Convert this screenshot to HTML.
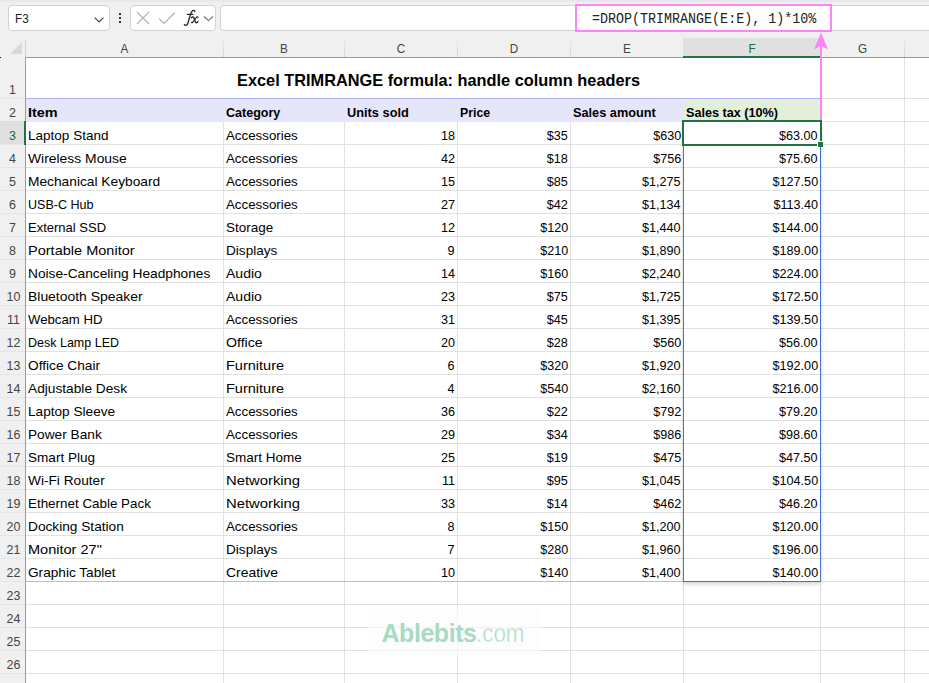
<!DOCTYPE html>
<html><head><meta charset="utf-8"><title>Excel TRIMRANGE</title>
<style>
html,body{margin:0;padding:0;}
body{width:929px;height:683px;overflow:hidden;background:#f0f0f0;font-family:"Liberation Sans",sans-serif;position:relative;color:#000;}
.abs{position:absolute;}
.box{position:absolute;background:#fff;border:1px solid #d2d2d2;border-radius:4px;box-sizing:border-box;}
.sheet{position:absolute;left:26px;top:58px;width:903px;height:625px;background:#fff;}
.vl{position:absolute;width:1px;background:#e1e1e1;top:58px;height:625px;}
.hl{position:absolute;height:1px;background:#e1e1e1;left:26px;width:903px;}
.t{position:absolute;white-space:nowrap;font-size:13.6px;line-height:23px;height:23px;transform-origin:0 50%;}
.r{transform-origin:100% 50%;}
.b{font-weight:bold;}
.rh{position:absolute;left:-0.2px;width:25px;text-align:center;font-size:13.4px;color:#444;line-height:23px;height:23px;transform:scaleX(0.93);}
.ch{position:absolute;top:39px;height:19px;line-height:20px;text-align:center;font-size:12.6px;color:#444;transform:scaleX(0.93);}
</style></head><body>

<div class="abs" style="left:0;top:0;width:929px;height:3px;background:linear-gradient(#e4e4e4,#f0f0f0);"></div>
<div class="box" style="left:8px;top:5px;width:102px;height:26px;"></div>
<div class="abs" style="left:15px;top:5px;height:26px;line-height:27px;font-size:13.5px;color:#222;transform:scaleX(0.87);transform-origin:0 50%;">F3</div>
<svg class="abs" style="left:90px;top:10px" width="20" height="16" viewBox="90 10 20 16"><path d="M94.7 17.6 L99.1 22 L103.5 17.6" fill="none" stroke="#444" stroke-width="1.2"/></svg>
<div class="abs" style="left:119px;top:13.3px;width:2px;height:2px;background:#333;"></div>
<div class="abs" style="left:119px;top:17.2px;width:2px;height:2px;background:#333;"></div>
<div class="abs" style="left:119px;top:21.1px;width:2px;height:2px;background:#333;"></div>
<div class="box" style="left:130px;top:5px;width:86px;height:26px;"></div>
<svg class="abs" style="left:136px;top:11px" width="14" height="14" viewBox="0 0 14 14"><path d="M1 1 L13 13 M13 1 L1 13" fill="none" stroke="#b4b4b4" stroke-width="1.2"/></svg>
<svg class="abs" style="left:158px;top:11px" width="18" height="14" viewBox="0 0 18 14"><path d="M1 7.5 L6 12.5 L17 1.5" fill="none" stroke="#b4b4b4" stroke-width="1.2"/></svg>
<svg class="abs" style="left:180px;top:6px" width="22" height="24" viewBox="180 6 22 24"><g fill="none" stroke="#262626" stroke-linecap="round" stroke-linejoin="round"><path d="M194.8 11.5 C194.6 10.2 192.9 9.9 192.1 11.1 C191.1 12.5 190.1 15.5 189.3 18.5 C188.5 21.5 188.1 23.6 187.1 24.7 C186.3 25.7 184.8 25.6 184.4 24.6" stroke-width="1.35"/><path d="M187.3 14.4 L192.8 14.4" stroke-width="1.1"/><path d="M191.6 17.8 C192.2 16.7 193.4 16.5 193.9 17.7 L195.3 21.9 C195.7 23.1 197.1 23 197.9 21.7" stroke-width="1.35"/><path d="M198.1 17.3 C197.7 16.6 196.9 16.8 196.2 17.7 L193.1 21.9 C192.5 22.8 191.7 22.9 191.4 22.3" stroke-width="1.1"/></g></svg>
<svg class="abs" style="left:200px;top:10px" width="16" height="16" viewBox="200 10 16 16"><path d="M204 16.5 L208.5 20.6 L213 16.5" fill="none" stroke="#707070" stroke-width="1.1"/></svg>
<div class="box" style="left:220px;top:5px;width:720px;height:26px;"></div>
<div class="abs" style="left:575px;top:4px;width:257px;height:28px;box-sizing:border-box;border:2px solid #fb84f8;background:#fff;"></div>
<div class="abs" style="left:592px;top:5.5px;height:28px;line-height:28px;font-family:'Liberation Mono',monospace;font-size:13.35px;color:#222;white-space:nowrap;transform:scaleY(1.06);transform-origin:0 70%;">=DROP(TRIMRANGE(E:E), 1)*10%</div>
<div class="ch" style="left:26px;width:197px;">A</div>
<div class="abs" style="left:223px;top:39px;width:1px;height:18px;background:linear-gradient(#ececec,#d2d2d2);"></div>
<div class="ch" style="left:224px;width:120px;">B</div>
<div class="abs" style="left:344px;top:39px;width:1px;height:18px;background:linear-gradient(#ececec,#d2d2d2);"></div>
<div class="ch" style="left:345px;width:112px;">C</div>
<div class="abs" style="left:457px;top:39px;width:1px;height:18px;background:linear-gradient(#ececec,#d2d2d2);"></div>
<div class="ch" style="left:458px;width:112px;">D</div>
<div class="abs" style="left:570px;top:39px;width:1px;height:18px;background:linear-gradient(#ececec,#d2d2d2);"></div>
<div class="ch" style="left:571px;width:112px;">E</div>
<div class="abs" style="left:683px;top:38px;width:137px;height:19px;background:#e0e0e0;"></div>
<div class="ch" style="left:684px;width:136px;color:#1e6b41;">F</div>
<div class="ch" style="left:821px;width:83px;">G</div>
<div class="abs" style="left:904px;top:39px;width:1px;height:18px;background:linear-gradient(#ececec,#d2d2d2);"></div>
<div class="ch" style="left:905px;width:85px;">H</div>
<div class="abs" style="left:990px;top:39px;width:1px;height:18px;background:linear-gradient(#ececec,#d2d2d2);"></div>
<svg class="abs" style="left:10px;top:42px" width="13" height="13" viewBox="0 0 13 13"><path d="M12 0 L12 12 L0 12 Z" fill="#d8d8d8"/></svg>
<div class="abs" style="left:25px;top:40px;width:1px;height:17px;background:#d0d0d0;"></div>
<div class="abs" style="left:25px;top:57px;width:904px;height:1px;background:#9b9b9b;"></div>
<div class="abs" style="left:25px;top:57px;width:1px;height:626px;background:#9b9b9b;"></div>
<div class="abs" style="left:683px;top:56px;width:138px;height:2px;background:#217346;"></div>
<div class="sheet"></div>
<div class="vl" style="left:223px;"></div>
<div class="vl" style="left:344px;"></div>
<div class="vl" style="left:457px;"></div>
<div class="vl" style="left:570px;"></div>
<div class="vl" style="left:683px;"></div>
<div class="vl" style="left:820px;"></div>
<div class="vl" style="left:904px;"></div>
<div class="hl" style="top:98px;"></div>
<div class="hl" style="top:121px;"></div>
<div class="hl" style="top:144px;"></div>
<div class="hl" style="top:167px;"></div>
<div class="hl" style="top:190px;"></div>
<div class="hl" style="top:213px;"></div>
<div class="hl" style="top:236px;"></div>
<div class="hl" style="top:259px;"></div>
<div class="hl" style="top:282px;"></div>
<div class="hl" style="top:305px;"></div>
<div class="hl" style="top:328px;"></div>
<div class="hl" style="top:351px;"></div>
<div class="hl" style="top:374px;"></div>
<div class="hl" style="top:397px;"></div>
<div class="hl" style="top:420px;"></div>
<div class="hl" style="top:443px;"></div>
<div class="hl" style="top:466px;"></div>
<div class="hl" style="top:489px;"></div>
<div class="hl" style="top:512px;"></div>
<div class="hl" style="top:535px;"></div>
<div class="hl" style="top:558px;"></div>
<div class="hl" style="top:581px;"></div>
<div class="hl" style="top:604px;"></div>
<div class="hl" style="top:627px;"></div>
<div class="hl" style="top:650px;"></div>
<div class="hl" style="top:673px;"></div>
<div class="abs" style="left:26px;top:58px;width:794px;height:40px;background:#fff;"></div>
<div class="abs" style="left:26px;top:98px;width:657px;height:24px;background:#e6e6fa;"></div>
<div class="abs" style="left:683px;top:98px;width:137px;height:24px;background:#e2efda;"></div>
<div class="abs" style="left:26px;top:98px;width:794px;height:1px;background:#b0b0f8;"></div>
<div class="abs" style="left:26px;top:581px;width:657px;height:1px;background:#b9b9f0;"></div>
<div class="abs" style="left:0;top:98px;width:25px;height:1px;background:#e5e5e5;"></div>
<div class="abs" style="left:0;top:121px;width:25px;height:1px;background:#e5e5e5;"></div>
<div class="abs" style="left:0;top:144px;width:25px;height:1px;background:#e5e5e5;"></div>
<div class="abs" style="left:0;top:167px;width:25px;height:1px;background:#e5e5e5;"></div>
<div class="abs" style="left:0;top:190px;width:25px;height:1px;background:#e5e5e5;"></div>
<div class="abs" style="left:0;top:213px;width:25px;height:1px;background:#e5e5e5;"></div>
<div class="abs" style="left:0;top:236px;width:25px;height:1px;background:#e5e5e5;"></div>
<div class="abs" style="left:0;top:259px;width:25px;height:1px;background:#e5e5e5;"></div>
<div class="abs" style="left:0;top:282px;width:25px;height:1px;background:#e5e5e5;"></div>
<div class="abs" style="left:0;top:305px;width:25px;height:1px;background:#e5e5e5;"></div>
<div class="abs" style="left:0;top:328px;width:25px;height:1px;background:#e5e5e5;"></div>
<div class="abs" style="left:0;top:351px;width:25px;height:1px;background:#e5e5e5;"></div>
<div class="abs" style="left:0;top:374px;width:25px;height:1px;background:#e5e5e5;"></div>
<div class="abs" style="left:0;top:397px;width:25px;height:1px;background:#e5e5e5;"></div>
<div class="abs" style="left:0;top:420px;width:25px;height:1px;background:#e5e5e5;"></div>
<div class="abs" style="left:0;top:443px;width:25px;height:1px;background:#e5e5e5;"></div>
<div class="abs" style="left:0;top:466px;width:25px;height:1px;background:#e5e5e5;"></div>
<div class="abs" style="left:0;top:489px;width:25px;height:1px;background:#e5e5e5;"></div>
<div class="abs" style="left:0;top:512px;width:25px;height:1px;background:#e5e5e5;"></div>
<div class="abs" style="left:0;top:535px;width:25px;height:1px;background:#e5e5e5;"></div>
<div class="abs" style="left:0;top:558px;width:25px;height:1px;background:#e5e5e5;"></div>
<div class="abs" style="left:0;top:581px;width:25px;height:1px;background:#e5e5e5;"></div>
<div class="abs" style="left:0;top:604px;width:25px;height:1px;background:#e5e5e5;"></div>
<div class="abs" style="left:0;top:627px;width:25px;height:1px;background:#e5e5e5;"></div>
<div class="abs" style="left:0;top:650px;width:25px;height:1px;background:#e5e5e5;"></div>
<div class="abs" style="left:0;top:673px;width:25px;height:1px;background:#e5e5e5;"></div>
<div class="rh" style="top:78px;">1</div>
<div class="rh" style="top:101px;">2</div>
<div class="abs" style="left:0;top:121px;width:24px;height:23px;background:#e0e0e0;"></div>
<div class="abs" style="left:24px;top:121px;width:2px;height:24px;background:#217346;"></div>
<div class="rh" style="top:124px;color:#1e6b41;">3</div>
<div class="rh" style="top:147px;color:#444;">4</div>
<div class="rh" style="top:170px;color:#444;">5</div>
<div class="rh" style="top:193px;color:#444;">6</div>
<div class="rh" style="top:216px;color:#444;">7</div>
<div class="rh" style="top:239px;color:#444;">8</div>
<div class="rh" style="top:262px;color:#444;">9</div>
<div class="rh" style="top:285px;color:#444;left:0.7px;">10</div>
<div class="rh" style="top:308px;color:#444;left:0.7px;">11</div>
<div class="rh" style="top:331px;color:#444;left:0.7px;">12</div>
<div class="rh" style="top:354px;color:#444;left:0.7px;">13</div>
<div class="rh" style="top:377px;color:#444;left:0.7px;">14</div>
<div class="rh" style="top:400px;color:#444;left:0.7px;">15</div>
<div class="rh" style="top:423px;color:#444;left:0.7px;">16</div>
<div class="rh" style="top:446px;color:#444;left:0.7px;">17</div>
<div class="rh" style="top:469px;color:#444;left:0.7px;">18</div>
<div class="rh" style="top:492px;color:#444;left:0.7px;">19</div>
<div class="rh" style="top:515px;color:#444;left:0.7px;">20</div>
<div class="rh" style="top:538px;color:#444;left:0.7px;">21</div>
<div class="rh" style="top:561px;color:#444;left:0.7px;">22</div>
<div class="rh" style="top:584px;color:#444;left:0.7px;">23</div>
<div class="rh" style="top:607px;color:#444;left:0.7px;">24</div>
<div class="rh" style="top:630px;color:#444;left:0.7px;">25</div>
<div class="rh" style="top:653px;color:#444;left:0.7px;">26</div>
<div class="rh" style="top:676px;color:#444;left:0.7px;">27</div>
<div class="abs b" style="left:237px;top:68px;font-size:16.2px;line-height:24px;white-space:nowrap;transform:scaleX(1.009);transform-origin:0 50%;" id="title">Excel TRIMRANGE formula: handle column headers</div>
<div class="t b" style="left:28px;top:101px;transform:scaleX(1.0624);">Item</div>
<div class="t b" style="left:226px;top:101px;transform:scaleX(0.9216);">Category</div>
<div class="t b" style="left:347px;top:101px;transform:scaleX(0.9407);">Units sold</div>
<div class="t b" style="left:460px;top:101px;transform:scaleX(0.9058);">Price</div>
<div class="t b" style="left:573px;top:101px;transform:scaleX(0.937);">Sales amount</div>
<div class="t b" style="left:686px;top:101px;transform:scaleX(0.9298);">Sales tax (10%)</div>
<div class="t" style="left:28px;top:124px;transform:scaleX(0.9952);">Laptop Stand</div>
<div class="t" style="left:226px;top:124px;transform:scaleX(0.9786);">Accessories</div>
<div class="t r" style="right:474px;top:124px;transform:scaleX(0.927);">18</div>
<div class="t r" style="right:361px;top:124px;transform:scaleX(0.927);">$35</div>
<div class="t r" style="right:248px;top:124px;transform:scaleX(0.927);">$630</div>
<div class="t r" style="right:111px;top:124px;transform:scaleX(0.927);">$63.00</div>
<div class="t" style="left:28px;top:147px;transform:scaleX(1.0211);">Wireless Mouse</div>
<div class="t" style="left:226px;top:147px;transform:scaleX(0.9786);">Accessories</div>
<div class="t r" style="right:474px;top:147px;transform:scaleX(0.927);">42</div>
<div class="t r" style="right:361px;top:147px;transform:scaleX(0.927);">$18</div>
<div class="t r" style="right:248px;top:147px;transform:scaleX(0.927);">$756</div>
<div class="t r" style="right:111px;top:147px;transform:scaleX(0.927);">$75.60</div>
<div class="t" style="left:28px;top:170px;transform:scaleX(1.0109);">Mechanical Keyboard</div>
<div class="t" style="left:226px;top:170px;transform:scaleX(0.9786);">Accessories</div>
<div class="t r" style="right:474px;top:170px;transform:scaleX(0.927);">15</div>
<div class="t r" style="right:361px;top:170px;transform:scaleX(0.927);">$85</div>
<div class="t r" style="right:248px;top:170px;transform:scaleX(0.927);">$1,275</div>
<div class="t r" style="right:111px;top:170px;transform:scaleX(0.927);">$127.50</div>
<div class="t" style="left:28px;top:193px;transform:scaleX(0.9224);">USB-C Hub</div>
<div class="t" style="left:226px;top:193px;transform:scaleX(0.9786);">Accessories</div>
<div class="t r" style="right:474px;top:193px;transform:scaleX(0.927);">27</div>
<div class="t r" style="right:361px;top:193px;transform:scaleX(0.927);">$42</div>
<div class="t r" style="right:248px;top:193px;transform:scaleX(0.927);">$1,134</div>
<div class="t r" style="right:111px;top:193px;transform:scaleX(0.927);">$113.40</div>
<div class="t" style="left:28px;top:216px;transform:scaleX(0.9571);">External SSD</div>
<div class="t" style="left:226px;top:216px;transform:scaleX(0.9916);">Storage</div>
<div class="t r" style="right:474px;top:216px;transform:scaleX(0.927);">12</div>
<div class="t r" style="right:361px;top:216px;transform:scaleX(0.927);">$120</div>
<div class="t r" style="right:248px;top:216px;transform:scaleX(0.927);">$1,440</div>
<div class="t r" style="right:111px;top:216px;transform:scaleX(0.927);">$144.00</div>
<div class="t" style="left:28px;top:239px;transform:scaleX(1.0687);">Portable Monitor</div>
<div class="t" style="left:226px;top:239px;transform:scaleX(1.0003);">Displays</div>
<div class="t r" style="right:474px;top:239px;transform:scaleX(0.927);">9</div>
<div class="t r" style="right:361px;top:239px;transform:scaleX(0.927);">$210</div>
<div class="t r" style="right:248px;top:239px;transform:scaleX(0.927);">$1,890</div>
<div class="t r" style="right:111px;top:239px;transform:scaleX(0.927);">$189.00</div>
<div class="t" style="left:28px;top:262px;transform:scaleX(1.0093);">Noise-Canceling Headphones</div>
<div class="t" style="left:226px;top:262px;transform:scaleX(1.0318);">Audio</div>
<div class="t r" style="right:474px;top:262px;transform:scaleX(0.927);">14</div>
<div class="t r" style="right:361px;top:262px;transform:scaleX(0.927);">$160</div>
<div class="t r" style="right:248px;top:262px;transform:scaleX(0.927);">$2,240</div>
<div class="t r" style="right:111px;top:262px;transform:scaleX(0.927);">$224.00</div>
<div class="t" style="left:28px;top:285px;transform:scaleX(1.0241);">Bluetooth Speaker</div>
<div class="t" style="left:226px;top:285px;transform:scaleX(1.0318);">Audio</div>
<div class="t r" style="right:474px;top:285px;transform:scaleX(0.927);">23</div>
<div class="t r" style="right:361px;top:285px;transform:scaleX(0.927);">$75</div>
<div class="t r" style="right:248px;top:285px;transform:scaleX(0.927);">$1,725</div>
<div class="t r" style="right:111px;top:285px;transform:scaleX(0.927);">$172.50</div>
<div class="t" style="left:28px;top:308px;transform:scaleX(0.9696);">Webcam HD</div>
<div class="t" style="left:226px;top:308px;transform:scaleX(0.9786);">Accessories</div>
<div class="t r" style="right:474px;top:308px;transform:scaleX(0.927);">31</div>
<div class="t r" style="right:361px;top:308px;transform:scaleX(0.927);">$45</div>
<div class="t r" style="right:248px;top:308px;transform:scaleX(0.927);">$1,395</div>
<div class="t r" style="right:111px;top:308px;transform:scaleX(0.927);">$139.50</div>
<div class="t" style="left:28px;top:331px;transform:scaleX(0.9196);">Desk Lamp LED</div>
<div class="t" style="left:226px;top:331px;transform:scaleX(1.0415);">Office</div>
<div class="t r" style="right:474px;top:331px;transform:scaleX(0.927);">20</div>
<div class="t r" style="right:361px;top:331px;transform:scaleX(0.927);">$28</div>
<div class="t r" style="right:248px;top:331px;transform:scaleX(0.927);">$560</div>
<div class="t r" style="right:111px;top:331px;transform:scaleX(0.927);">$56.00</div>
<div class="t" style="left:28px;top:354px;transform:scaleX(1.0068);">Office Chair</div>
<div class="t" style="left:226px;top:354px;transform:scaleX(1.0672);">Furniture</div>
<div class="t r" style="right:474px;top:354px;transform:scaleX(0.927);">6</div>
<div class="t r" style="right:361px;top:354px;transform:scaleX(0.927);">$320</div>
<div class="t r" style="right:248px;top:354px;transform:scaleX(0.927);">$1,920</div>
<div class="t r" style="right:111px;top:354px;transform:scaleX(0.927);">$192.00</div>
<div class="t" style="left:28px;top:377px;transform:scaleX(1.0085);">Adjustable Desk</div>
<div class="t" style="left:226px;top:377px;transform:scaleX(1.0672);">Furniture</div>
<div class="t r" style="right:474px;top:377px;transform:scaleX(0.927);">4</div>
<div class="t r" style="right:361px;top:377px;transform:scaleX(0.927);">$540</div>
<div class="t r" style="right:248px;top:377px;transform:scaleX(0.927);">$2,160</div>
<div class="t r" style="right:111px;top:377px;transform:scaleX(0.927);">$216.00</div>
<div class="t" style="left:28px;top:400px;transform:scaleX(1.0025);">Laptop Sleeve</div>
<div class="t" style="left:226px;top:400px;transform:scaleX(0.9786);">Accessories</div>
<div class="t r" style="right:474px;top:400px;transform:scaleX(0.927);">36</div>
<div class="t r" style="right:361px;top:400px;transform:scaleX(0.927);">$22</div>
<div class="t r" style="right:248px;top:400px;transform:scaleX(0.927);">$792</div>
<div class="t r" style="right:111px;top:400px;transform:scaleX(0.927);">$79.20</div>
<div class="t" style="left:28px;top:423px;transform:scaleX(1.0058);">Power Bank</div>
<div class="t" style="left:226px;top:423px;transform:scaleX(0.9786);">Accessories</div>
<div class="t r" style="right:474px;top:423px;transform:scaleX(0.927);">29</div>
<div class="t r" style="right:361px;top:423px;transform:scaleX(0.927);">$34</div>
<div class="t r" style="right:248px;top:423px;transform:scaleX(0.927);">$986</div>
<div class="t r" style="right:111px;top:423px;transform:scaleX(0.927);">$98.60</div>
<div class="t" style="left:28px;top:446px;transform:scaleX(0.9974);">Smart Plug</div>
<div class="t" style="left:226px;top:446px;transform:scaleX(0.9946);">Smart Home</div>
<div class="t r" style="right:474px;top:446px;transform:scaleX(0.927);">25</div>
<div class="t r" style="right:361px;top:446px;transform:scaleX(0.927);">$19</div>
<div class="t r" style="right:248px;top:446px;transform:scaleX(0.927);">$475</div>
<div class="t r" style="right:111px;top:446px;transform:scaleX(0.927);">$47.50</div>
<div class="t" style="left:28px;top:469px;transform:scaleX(1.0058);">Wi-Fi Router</div>
<div class="t" style="left:226px;top:469px;transform:scaleX(1.0894);">Networking</div>
<div class="t r" style="right:474px;top:469px;transform:scaleX(0.927);">11</div>
<div class="t r" style="right:361px;top:469px;transform:scaleX(0.927);">$95</div>
<div class="t r" style="right:248px;top:469px;transform:scaleX(0.927);">$1,045</div>
<div class="t r" style="right:111px;top:469px;transform:scaleX(0.927);">$104.50</div>
<div class="t" style="left:28px;top:492px;transform:scaleX(0.9858);">Ethernet Cable Pack</div>
<div class="t" style="left:226px;top:492px;transform:scaleX(1.0894);">Networking</div>
<div class="t r" style="right:474px;top:492px;transform:scaleX(0.927);">33</div>
<div class="t r" style="right:361px;top:492px;transform:scaleX(0.927);">$14</div>
<div class="t r" style="right:248px;top:492px;transform:scaleX(0.927);">$462</div>
<div class="t r" style="right:111px;top:492px;transform:scaleX(0.927);">$46.20</div>
<div class="t" style="left:28px;top:515px;transform:scaleX(1.0064);">Docking Station</div>
<div class="t" style="left:226px;top:515px;transform:scaleX(0.9786);">Accessories</div>
<div class="t r" style="right:474px;top:515px;transform:scaleX(0.927);">8</div>
<div class="t r" style="right:361px;top:515px;transform:scaleX(0.927);">$150</div>
<div class="t r" style="right:248px;top:515px;transform:scaleX(0.927);">$1,200</div>
<div class="t r" style="right:111px;top:515px;transform:scaleX(0.927);">$120.00</div>
<div class="t" style="left:28px;top:538px;transform:scaleX(1.0689);">Monitor 27&quot;</div>
<div class="t" style="left:226px;top:538px;transform:scaleX(1.0003);">Displays</div>
<div class="t r" style="right:474px;top:538px;transform:scaleX(0.927);">7</div>
<div class="t r" style="right:361px;top:538px;transform:scaleX(0.927);">$280</div>
<div class="t r" style="right:248px;top:538px;transform:scaleX(0.927);">$1,960</div>
<div class="t r" style="right:111px;top:538px;transform:scaleX(0.927);">$196.00</div>
<div class="t" style="left:28px;top:561px;transform:scaleX(1.0028);">Graphic Tablet</div>
<div class="t" style="left:226px;top:561px;transform:scaleX(1.0265);">Creative</div>
<div class="t r" style="right:474px;top:561px;transform:scaleX(0.927);">10</div>
<div class="t r" style="right:361px;top:561px;transform:scaleX(0.927);">$140</div>
<div class="t r" style="right:248px;top:561px;transform:scaleX(0.927);">$1,400</div>
<div class="t r" style="right:111px;top:561px;transform:scaleX(0.927);">$140.00</div>
<div class="abs" style="left:683px;top:121px;width:138px;height:461px;box-sizing:border-box;border:1px solid #4472c4;box-shadow:0 2px 4px rgba(0,0,0,0.18);"></div>
<div class="abs" style="left:682px;top:120px;width:140px;height:26px;box-sizing:border-box;border:2px solid #217346;"></div>
<div class="abs" style="left:817px;top:141px;width:6px;height:6px;box-sizing:border-box;background:#217346;border-top:1px solid #fff;border-left:1px solid #fff;"></div>
<div class="abs" style="left:820px;top:44px;width:2px;height:76px;background:#fb84f8;"></div>
<svg class="abs" style="left:813px;top:32px" width="16" height="19" viewBox="0 0 16 19"><path d="M8 0.6 L15 17.6 L8 13.6 L1 17.6 Z" fill="#fb84f8"/></svg>
<div class="abs" style="left:368px;top:609px;width:172px;height:46px;background:rgba(251,251,251,0.62);border-radius:6px;"></div>
<div class="abs b" id="lg1" style="left:381.5px;top:617.5px;font-size:25px;line-height:30px;color:#a7dbc4;white-space:nowrap;letter-spacing:-0.45px;">Ablebits</div>
<div class="abs" id="lg2" style="left:475.6px;top:617.5px;font-size:25px;line-height:30px;color:#a7dbc4;white-space:nowrap;transform:scaleX(0.895);transform-origin:0 50%;-webkit-text-stroke:0.5px #fdfdfd;">.com</div>
<div class="abs" style="left:0;top:57px;width:1.3px;height:1px;background:#222;"></div>
</body></html>
